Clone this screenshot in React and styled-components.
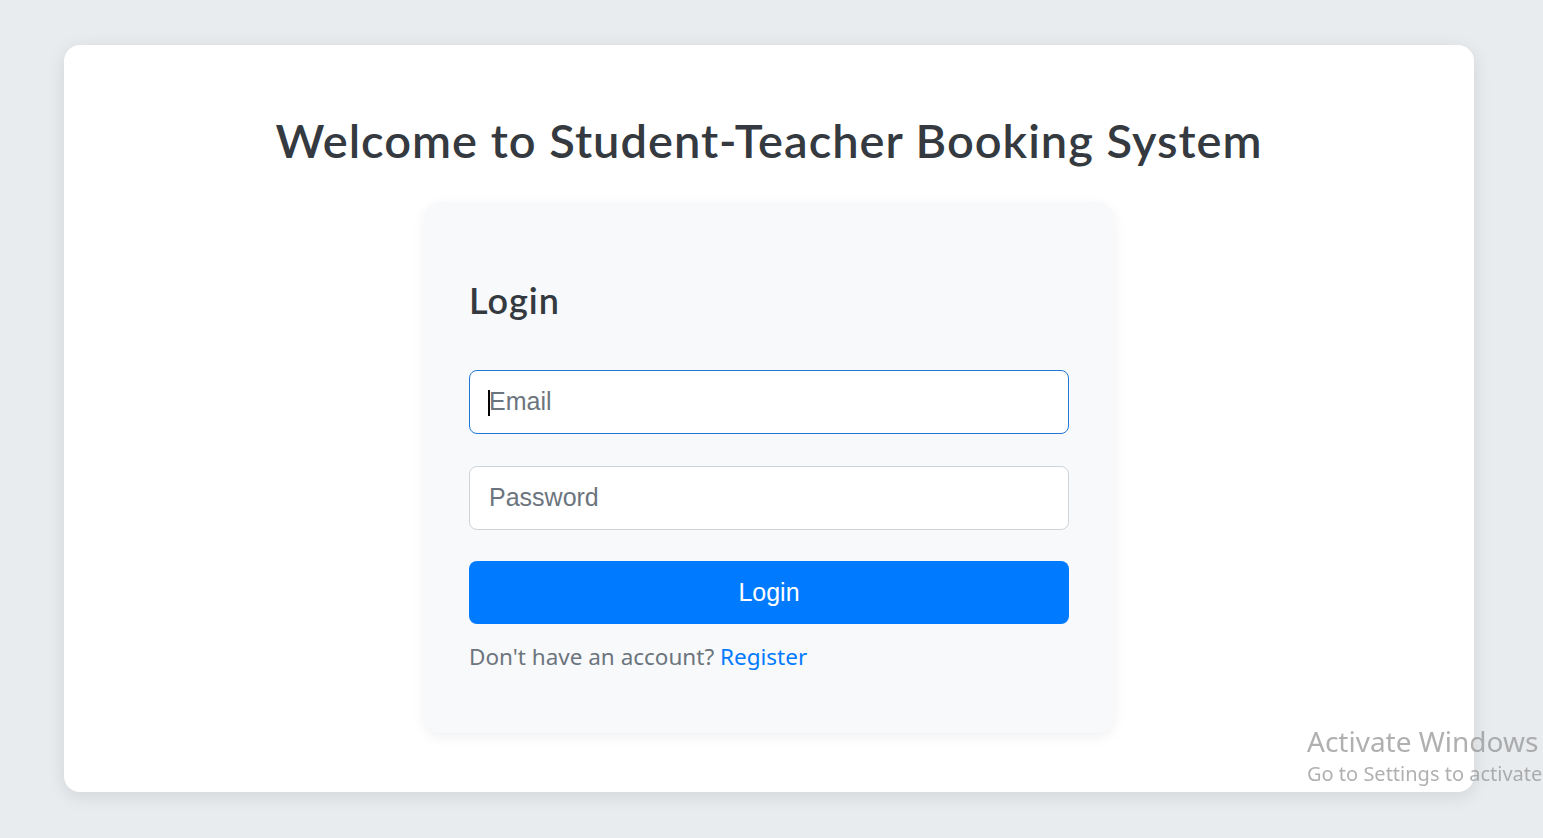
import React from 'react'
import styled, { createGlobalStyle } from 'styled-components'

const GlobalStyle = createGlobalStyle`
  html, body {
    margin: 0;
    padding: 0;
    background: #e9ecef;
    overflow: hidden;
  }
  * {
    box-sizing: border-box;
  }
`

function App() {
  return (
    <>
      <GlobalStyle />
      <Page>
        <Card>
          <Title>Welcome to Student-Teacher Booking System</Title>
          <LoginPanel>
            <PanelTitle>Login</PanelTitle>
            <Form onSubmit={(e) => e.preventDefault()}>
              <Field>
                <Input type='email' placeholder='Email' $focused />
                <Caret />
              </Field>
              <Field>
                <Input type='password' placeholder='Password' />
              </Field>
              <Button type='submit'>Login</Button>
            </Form>
            <Hint>
              Don't have an account? <a href='#register'>Register</a>
            </Hint>
          </LoginPanel>
        </Card>
      </Page>
      <Watermark>
        <strong>Activate Windows</strong>
        <span>Go to Settings to activate Windows.</span>
      </Watermark>
    </>
  )
}

export default App

const Page = styled.div`
  min-height: 100vh;
  padding: 45px 69px 46px 64px;
`

const Card = styled.div`
  height: 747px;
  background: #fff;
  border-radius: 16px;
  box-shadow: 0 4px 18px rgba(0, 0, 0, 0.1);
  padding: 67px 20px 0;
  display: flex;
  flex-direction: column;
  align-items: center;
`

const Title = styled.h1`
  margin: 0 0 34px;
  font-family: Lato, 'Noto Sans', sans-serif;
  font-size: 47px;
  font-weight: 600;
  letter-spacing: 1px;
  line-height: 1.2;
  color: #343a40;
  text-align: center;
`

const LoginPanel = styled.section`
  width: 690px;
  height: 531px;
  background: #f8f9fa;
  border-radius: 16px;
  box-shadow: 0 4px 14px rgba(0, 0, 0, 0.06);
  padding: 77px 45px 0;
`

const PanelTitle = styled.h2`
  margin: 0 0 47px;
  font-family: Lato, 'Noto Sans', sans-serif;
  font-size: 36px;
  font-weight: 600;
  letter-spacing: 1px;
  line-height: 1.2;
  color: #343a40;
`

const Form = styled.form`
  display: flex;
  flex-direction: column;
  gap: 32px;
`

const Field = styled.div`
  position: relative;
`

const Input = styled.input`
  display: block;
  width: 100%;
  height: 64px;
  padding: 0 19px;
  font-family: 'Liberation Sans', Arial, sans-serif;
  font-size: 25px;
  color: #495057;
  background: #fff;
  border: 1px solid ${(p) => (p.$focused ? '#1f78d6' : '#ced4da')};
  border-radius: 8px;
  outline: none;

  &::placeholder {
    color: #6c757d;
  }
`

const Caret = styled.span`
  position: absolute;
  left: 19px;
  top: 20px;
  width: 2px;
  height: 26px;
  background: #000;
`

const Button = styled.button`
  height: 63px;
  margin-top: -1px;
  border: none;
  border-radius: 8px;
  background: #007bff;
  color: #fff;
  font-family: 'Liberation Sans', Arial, sans-serif;
  font-size: 25px;
  cursor: pointer;
`

const Hint = styled.p`
  margin: 16px 0 0;
  font-family: 'Noto Sans', Lato, sans-serif;
  font-size: 22.5px;
  line-height: 1.5;
  color: #6c757d;

  a {
    color: #007bff;
    text-decoration: none;
  }
`

const Watermark = styled.div`
  position: fixed;
  left: 1307px;
  top: 722px;
  display: flex;
  flex-direction: column;
  white-space: nowrap;
  font-family: 'Noto Sans', 'Open Sans', sans-serif;
  color: rgba(150, 150, 150, 0.75);
  pointer-events: none;

  strong {
    font-size: 28px;
    font-weight: 400;
    line-height: 38px;
  }
  span {
    font-size: 20px;
    line-height: 28px;
  }
`
